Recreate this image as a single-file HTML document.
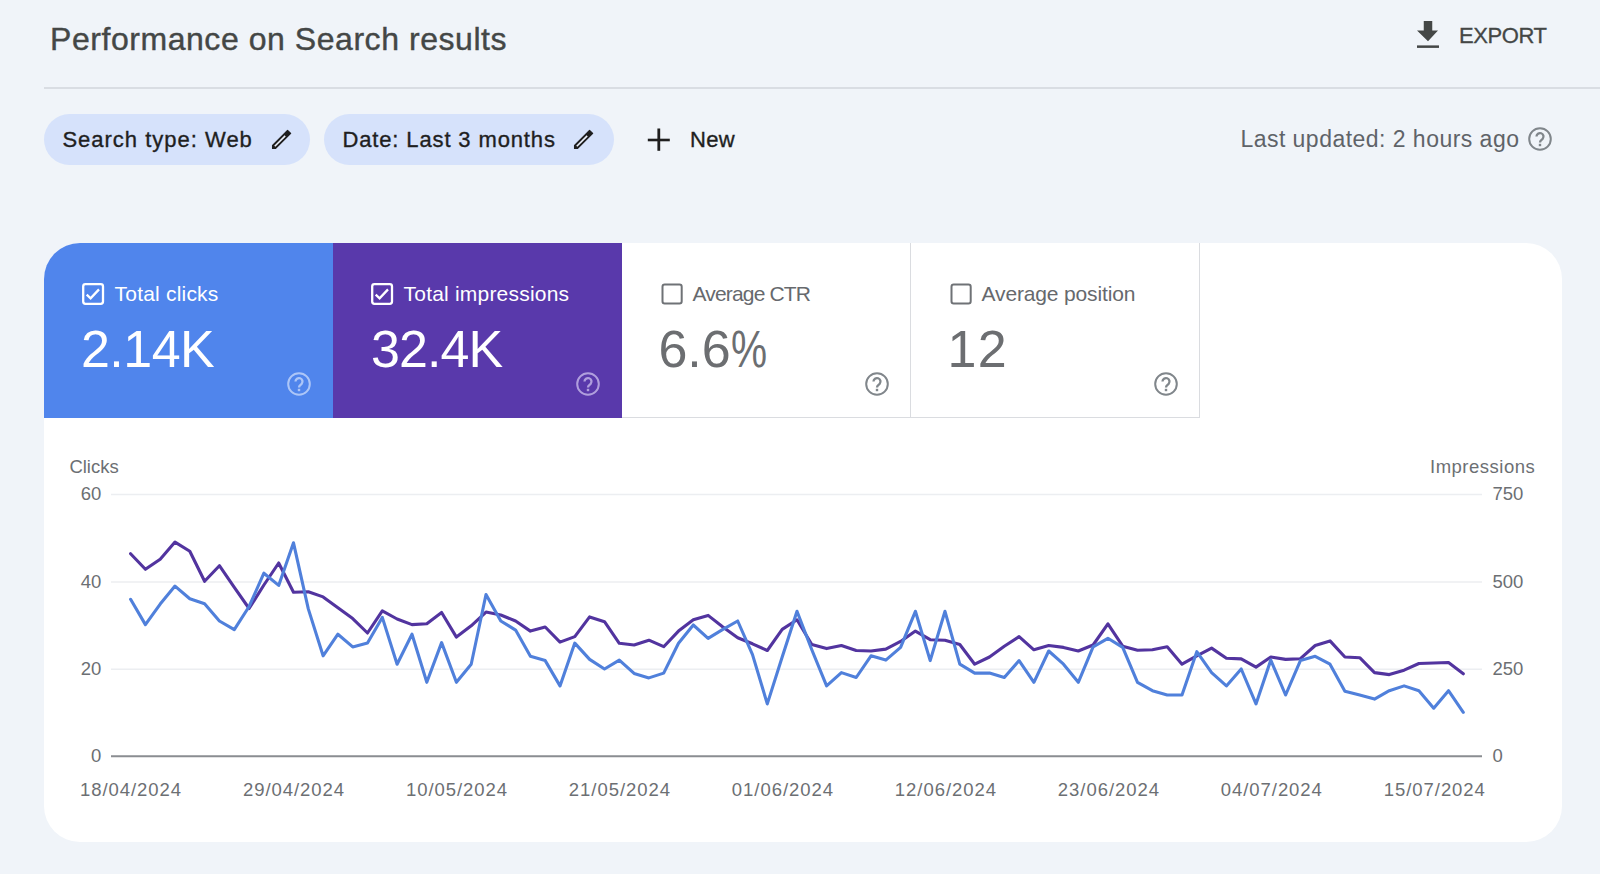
<!DOCTYPE html>
<html><head><meta charset="utf-8">
<style>
html,body{margin:0;padding:0;}
body{width:1600px;height:874px;overflow:hidden;background:#f0f4f9;position:relative;font-family:"Liberation Sans",sans-serif;}
.a{position:absolute;white-space:nowrap;line-height:1;}
.title{left:50px;top:22.51px;font-size:32px;letter-spacing:0.55px;color:#444746;-webkit-text-stroke:0.4px #444746;}
.divider{position:absolute;left:44px;top:87.25px;width:1556px;height:1.5px;background:#d9dde3;}
.export{left:1459px;top:25.13px;font-size:22px;color:#444746;letter-spacing:-0.4px;-webkit-text-stroke:0.3px #444746;}
.chip{position:absolute;top:114px;height:51px;border-radius:26px;background:#d6e2fb;}
.chiptext{font-size:22px;color:#1f1f1f;letter-spacing:1.0px;top:128.58px;-webkit-text-stroke:0.35px #1f1f1f;}
.updated{font-size:23px;color:#5f6368;letter-spacing:0.47px;left:1240.4px;top:128.43px;}
.card{position:absolute;left:44px;top:243px;width:1518px;height:599px;background:#fff;border-radius:36px;overflow:hidden;}
.tab{position:absolute;top:0;height:175px;width:289px;}
.tlabel{font-size:21px;}
.tval{font-size:52px;}
.ax{font-size:18.5px;color:#6c6f73;}
.tl{left:0;width:101.3px;text-align:right;}
.tr{left:1492.5px;}
.dt{width:120px;text-align:center;letter-spacing:0.95px;}
</style></head><body>
<div class="a title">Performance on Search results</div>
<div class="divider"></div>
<svg class="a" style="left:1410px;top:14px" width="36" height="40" viewBox="0 0 36 40">
  <path d="M13.75 7 H22.25 V16.6 H28 L18 27.25 L7 16.6 H13.75 Z" fill="#444746"/>
  <rect x="7" y="31.4" width="22" height="2.5" fill="#444746"/>
</svg>
<div class="a export">EXPORT</div>

<div class="chip" style="left:44px;width:266px;"></div>
<div class="a chiptext" style="left:62.4px;">Search type: Web</div>
<svg class="a" style="left:268.7px;top:126.9px" width="25" height="25" viewBox="0 0 24 24"><path d="M3.4 20.6 V17.6 L17.8 3.2 L20.8 6.2 L6.4 20.6 Z" fill="#1f1f1f" stroke="#1f1f1f" stroke-width="1.1" stroke-linejoin="round"/><path d="M5.0 17.9 L15.0 7.9 L16.1 9.0 L6.1 19.0 Z" fill="#eef2fc"/></svg>
<div class="chip" style="left:324px;width:290px;"></div>
<div class="a chiptext" style="left:342.4px;letter-spacing:0.87px;">Date: Last 3 months</div>
<svg class="a" style="left:571.4px;top:126.9px" width="25" height="25" viewBox="0 0 24 24"><path d="M3.4 20.6 V17.6 L17.8 3.2 L20.8 6.2 L6.4 20.6 Z" fill="#1f1f1f" stroke="#1f1f1f" stroke-width="1.1" stroke-linejoin="round"/><path d="M5.0 17.9 L15.0 7.9 L16.1 9.0 L6.1 19.0 Z" fill="#eef2fc"/></svg>
<svg class="a" style="left:640px;top:122px" width="36" height="36" viewBox="0 0 36 36"><rect x="7.8" y="16.7" width="22" height="2.6" fill="#1f1f1f"/><rect x="17.4" y="6.5" width="2.8" height="22.3" fill="#1f1f1f"/></svg>
<div class="a chiptext" style="left:690px;letter-spacing:0.3px;">New</div>
<div class="a updated">Last updated: 2 hours ago</div>
<svg class="a" style="left:1528.4px;top:127.4px" width="24" height="24" viewBox="0 0 24 24" stroke="#80868b" fill="#80868b"><circle cx="12" cy="12" r="10.8" fill="none" stroke-width="2"/><path d="M8.5 9.6a3.5 3.5 0 1 1 6.2 2.2c-0.9 1-2.7 1.8-2.7 3.6" fill="none" stroke-width="2.3"/><rect x="10.8" y="16.8" width="2.4" height="2.4" stroke="none"/></svg>

<div class="card">
  <div class="tab" style="left:0;background:#5085ec;"></div>
  <div class="tab" style="left:289px;background:#5939ab;"></div>
  <div class="tab" style="left:578px;border-right:1px solid #dadce0;border-bottom:1px solid #dadce0;width:288px;height:174px;"></div>
  <div class="tab" style="left:867px;border-right:1px solid #dadce0;border-bottom:1px solid #dadce0;width:288px;height:174px;"></div>
</div>
<svg class="a" style="left:82.4px;top:283.3px" width="24" height="24" viewBox="0 0 24 24"><rect x="1.2" y="1.2" width="19.8" height="19.6" rx="2.2" fill="none" stroke="#ffffff" stroke-width="2.3"/><path d="M4.7 11.7 L8.6 15.4 L17 6.4" fill="none" stroke="#ffffff" stroke-width="2.3"/></svg><div class="a tlabel" style="left:114.6px;top:283.42px;color:#ffffff;letter-spacing:0.2px;">Total clicks</div><div class="a tval" style="left:80.9px;top:323.18px;color:#ffffff;letter-spacing:-0.5px;">2.14K</div><svg class="a" style="left:287px;top:372px" width="24" height="24" viewBox="0 0 24 24" stroke="rgba(235,242,255,0.6)" fill="rgba(235,242,255,0.6)"><circle cx="12" cy="12" r="10.8" fill="none" stroke-width="2"/><path d="M8.5 9.6a3.5 3.5 0 1 1 6.2 2.2c-0.9 1-2.7 1.8-2.7 3.6" fill="none" stroke-width="2.3"/><rect x="10.8" y="16.8" width="2.4" height="2.4" stroke="none"/></svg><svg class="a" style="left:371.4px;top:283.3px" width="24" height="24" viewBox="0 0 24 24"><rect x="1.2" y="1.2" width="19.8" height="19.6" rx="2.2" fill="none" stroke="#ffffff" stroke-width="2.3"/><path d="M4.7 11.7 L8.6 15.4 L17 6.4" fill="none" stroke="#ffffff" stroke-width="2.3"/></svg><div class="a tlabel" style="left:403.6px;top:283.42px;color:#ffffff;letter-spacing:0.2px;">Total impressions</div><div class="a tval" style="left:371.0px;top:323.18px;color:#ffffff;letter-spacing:-0.9px;">32.4K</div><svg class="a" style="left:576px;top:372px" width="24" height="24" viewBox="0 0 24 24" stroke="rgba(235,228,255,0.6)" fill="rgba(235,228,255,0.6)"><circle cx="12" cy="12" r="10.8" fill="none" stroke-width="2"/><path d="M8.5 9.6a3.5 3.5 0 1 1 6.2 2.2c-0.9 1-2.7 1.8-2.7 3.6" fill="none" stroke-width="2.3"/><rect x="10.8" y="16.8" width="2.4" height="2.4" stroke="none"/></svg><svg class="a" style="left:660.7px;top:283.3px" width="24" height="24" viewBox="0 0 24 24"><rect x="1.5" y="1.5" width="19.2" height="19.0" rx="2.2" fill="none" stroke="#6f7276" stroke-width="2.0"/></svg><div class="a tlabel" style="left:692.6px;top:283.42px;color:#66696d;letter-spacing:-0.85px;">Average CTR</div><div class="a tval" style="left:658.4000000000001px;top:323.18px;color:#6c6e71;letter-spacing:0.0px;">6.6<span style="display:inline-block;transform:scaleX(0.78);transform-origin:0 0;">%</span></div><svg class="a" style="left:865px;top:372px" width="24" height="24" viewBox="0 0 24 24" stroke="#80868b" fill="#80868b"><circle cx="12" cy="12" r="10.8" fill="none" stroke-width="2"/><path d="M8.5 9.6a3.5 3.5 0 1 1 6.2 2.2c-0.9 1-2.7 1.8-2.7 3.6" fill="none" stroke-width="2.3"/><rect x="10.8" y="16.8" width="2.4" height="2.4" stroke="none"/></svg><svg class="a" style="left:949.7px;top:283.3px" width="24" height="24" viewBox="0 0 24 24"><rect x="1.5" y="1.5" width="19.2" height="19.0" rx="2.2" fill="none" stroke="#6f7276" stroke-width="2.0"/></svg><div class="a tlabel" style="left:981.6px;top:283.42px;color:#66696d;letter-spacing:-0.15px;">Average position</div><div class="a tval" style="left:947.4000000000001px;top:323.18px;color:#6c6e71;letter-spacing:1.5px;">12</div><svg class="a" style="left:1154px;top:372px" width="24" height="24" viewBox="0 0 24 24" stroke="#80868b" fill="#80868b"><circle cx="12" cy="12" r="10.8" fill="none" stroke-width="2"/><path d="M8.5 9.6a3.5 3.5 0 1 1 6.2 2.2c-0.9 1-2.7 1.8-2.7 3.6" fill="none" stroke-width="2.3"/><rect x="10.8" y="16.8" width="2.4" height="2.4" stroke="none"/></svg>
<div class="a ax" style="left:69.4px;top:458.14px;">Clicks</div>
<div class="a ax" style="left:1430px;top:458.34px;letter-spacing:0.5px;">Impressions</div>
<div class="a ax tl" style="top:485.14px;">60</div><div class="a ax tr" style="top:485.14px;">750</div><div class="a ax tl" style="top:572.54px;">40</div><div class="a ax tr" style="top:572.54px;">500</div><div class="a ax tl" style="top:659.74px;">20</div><div class="a ax tr" style="top:659.74px;">250</div><div class="a ax tl" style="top:746.84px;">0</div><div class="a ax tr" style="top:746.84px;">0</div>
<div class="a ax dt" style="left:71.0px;top:781.34px;">18/04/2024</div><div class="a ax dt" style="left:234.0px;top:781.34px;">29/04/2024</div><div class="a ax dt" style="left:397.0px;top:781.34px;">10/05/2024</div><div class="a ax dt" style="left:559.9px;top:781.34px;">21/05/2024</div><div class="a ax dt" style="left:722.9px;top:781.34px;">01/06/2024</div><div class="a ax dt" style="left:885.9px;top:781.34px;">12/06/2024</div><div class="a ax dt" style="left:1048.9px;top:781.34px;">23/06/2024</div><div class="a ax dt" style="left:1211.8px;top:781.34px;">04/07/2024</div><div class="a ax dt" style="left:1374.8px;top:781.34px;">15/07/2024</div>
<svg class="a" style="left:0;top:0" width="1600" height="874" viewBox="0 0 1600 874">
  <g stroke="#eceef1" stroke-width="1.5">
    <line x1="111" y1="494.6" x2="1482" y2="494.6"/>
    <line x1="111" y1="582" x2="1482" y2="582"/>
    <line x1="111" y1="669.2" x2="1482" y2="669.2"/>
  </g>
  <line x1="111" y1="756.3" x2="1482" y2="756.3" stroke="#8a8d91" stroke-width="2"/>
  <polyline fill="none" stroke="#52349f" stroke-width="3.1" stroke-linejoin="round" stroke-linecap="round" points="130.6,553.7 145.4,569.3 160.2,559.2 175.0,542.1 189.8,551.3 204.6,581.3 219.4,565.7 234.3,587.3 249.1,608.5 263.9,585.0 278.7,563.0 293.5,592.3 308.3,591.8 323.1,596.9 337.9,607.7 352.7,618.6 367.5,633.0 382.3,610.9 397.1,619.0 412.0,624.6 426.8,623.8 441.6,612.5 456.4,637.1 471.2,625.8 486.0,612.1 500.8,615.0 515.6,621.0 530.4,631.1 545.2,627.0 560.0,642.1 574.8,636.6 589.6,616.9 604.5,621.7 619.3,643.3 634.1,645.0 648.9,640.2 663.7,646.7 678.5,631.1 693.3,619.8 708.1,615.4 722.9,627.0 737.7,637.8 752.5,643.8 767.3,650.5 782.2,629.4 797.0,619.8 811.8,644.5 826.6,648.6 841.4,645.5 856.2,650.5 871.0,651.0 885.8,649.1 900.6,641.4 915.4,631.1 930.2,639.7 945.0,640.2 959.8,644.5 974.7,664.2 989.5,657.0 1004.3,646.2 1019.1,636.6 1033.9,649.8 1048.7,645.5 1063.5,647.4 1078.3,651.0 1093.1,645.0 1107.9,623.8 1122.7,646.2 1137.5,650.3 1152.4,649.8 1167.2,646.7 1182.0,664.2 1196.8,655.8 1211.6,648.1 1226.4,658.2 1241.2,658.9 1256.0,667.1 1270.8,657.0 1285.6,659.4 1300.4,658.7 1315.2,645.5 1330.0,640.9 1344.9,657.0 1359.7,657.7 1374.5,672.6 1389.3,674.6 1404.1,670.2 1418.9,663.5 1433.7,663.0 1448.5,662.5 1463.3,673.8"/>
  <polyline fill="none" stroke="#5080db" stroke-width="3.1" stroke-linejoin="round" stroke-linecap="round" points="130.6,599.3 145.4,624.6 160.2,604.1 175.0,586.1 189.8,598.8 204.6,603.7 219.4,621.0 234.3,629.7 249.1,606.5 263.9,573.2 278.7,585.4 293.5,542.8 308.3,608.9 323.1,655.8 337.9,634.2 352.7,646.9 367.5,643.1 382.3,617.4 397.1,664.2 412.0,634.2 426.8,682.3 441.6,642.6 456.4,682.3 471.2,664.2 486.0,594.5 500.8,621.0 515.6,630.1 530.4,656.3 545.2,660.6 560.0,685.9 574.8,643.1 589.6,659.4 604.5,669.0 619.3,660.1 634.1,673.4 648.9,677.9 663.7,673.1 678.5,643.3 693.3,625.0 708.1,638.3 722.9,629.4 737.7,621.0 752.5,654.6 767.3,703.9 782.2,657.0 797.0,611.3 811.8,649.8 826.6,685.9 841.4,672.6 856.2,677.5 871.0,655.8 885.8,660.1 900.6,647.4 915.4,611.3 930.2,660.6 945.0,611.3 959.8,664.2 974.7,673.1 989.5,673.1 1004.3,677.5 1019.1,660.6 1033.9,682.3 1048.7,651.0 1063.5,664.2 1078.3,682.3 1093.1,646.9 1107.9,638.3 1122.7,647.4 1137.5,682.3 1152.4,690.7 1167.2,695.0 1182.0,695.0 1196.8,651.7 1211.6,672.6 1226.4,685.9 1241.2,669.0 1256.0,703.9 1270.8,660.1 1285.6,695.0 1300.4,660.6 1315.2,656.3 1330.0,664.2 1344.9,691.2 1359.7,695.0 1374.5,699.1 1389.3,690.7 1404.1,685.9 1418.9,690.7 1433.7,708.2 1448.5,690.7 1463.3,712.3"/>
</svg>
</body></html>
